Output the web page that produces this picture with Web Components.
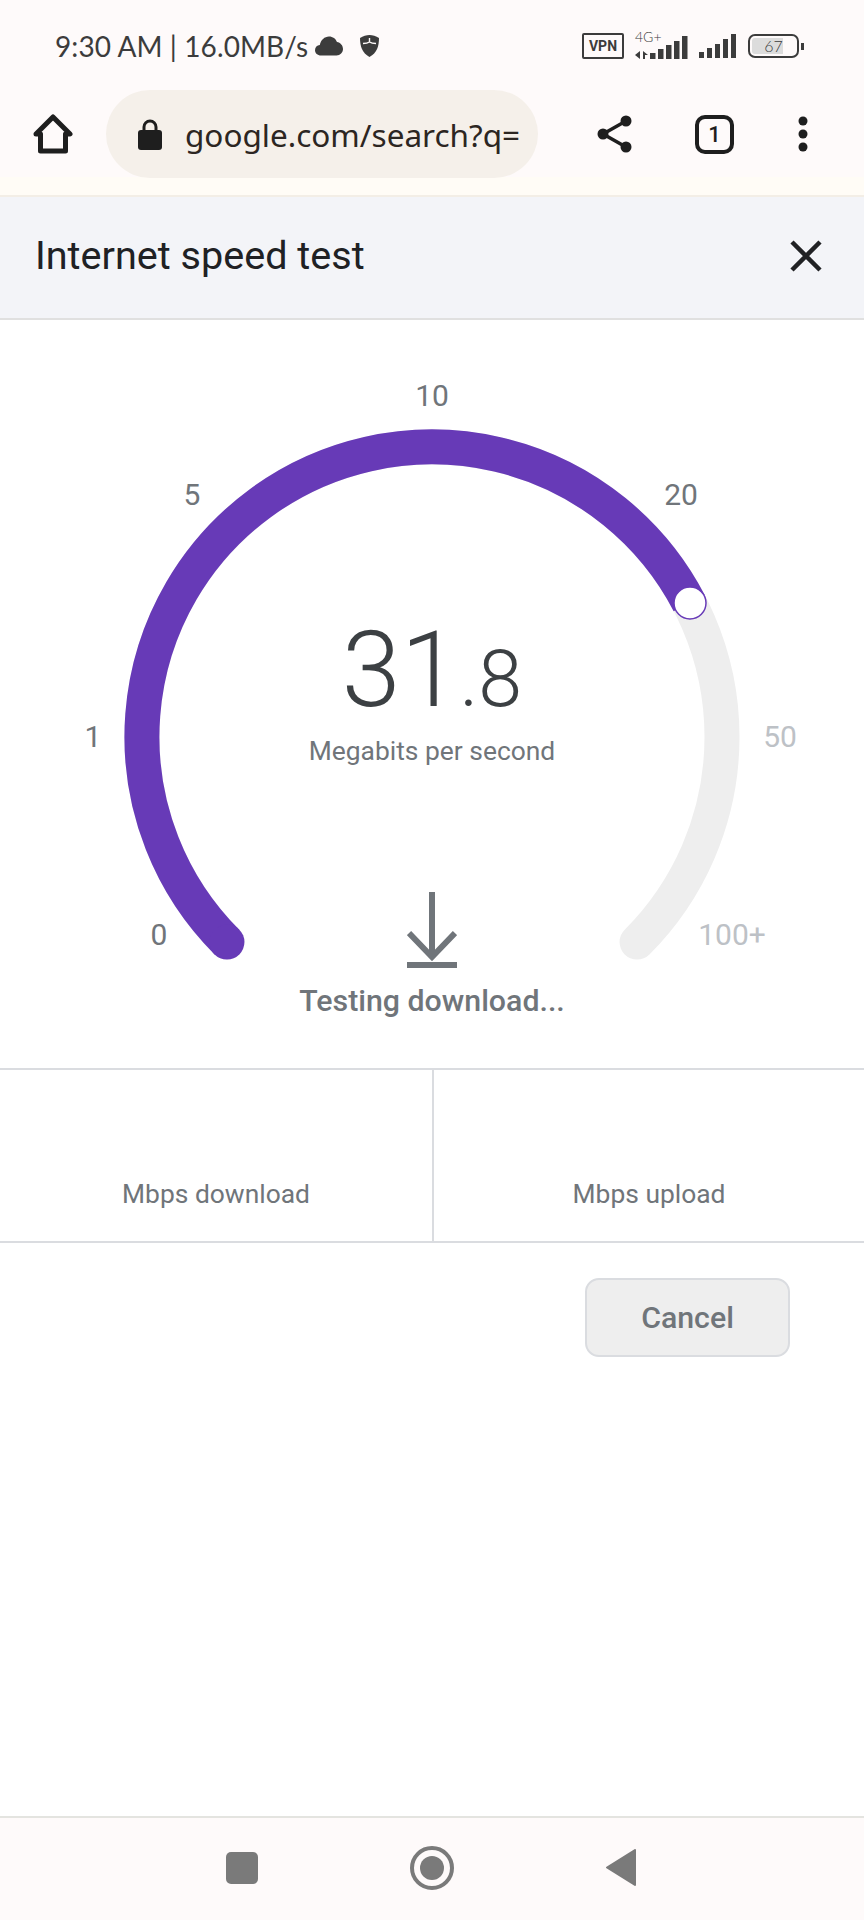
<!DOCTYPE html>
<html>
<head>
<meta charset="utf-8">
<title>Internet speed test</title>
<style>
  html, body { margin: 0; padding: 0; background: #fff; }
  body { width: 864px; height: 1920px; display: flex; flex-direction: column; overflow: hidden; font-family: Roboto, "Liberation Sans", sans-serif; }
  speed-main { flex: 1; }
</style>
</head>
<body>
<status-bar></status-bar>
<browser-toolbar url="google.com/search?q="></browser-toolbar>
<speed-main>
  <speed-header>Internet speed test</speed-header>
  <speed-gauge></speed-gauge>
  <speed-results></speed-results>
  <speed-actions><action-button>Cancel</action-button></speed-actions>
</speed-main>
<nav-bar></nav-bar>

<script>
class StatusBar extends HTMLElement {
  constructor(){
    super();
    this._root = this.attachShadow({mode: 'open'});
  }
  connectedCallback() {
    this._root.innerHTML = `
    <style>
      :host { display: flex; align-items: center; height: 72px; padding: 20px 0 0 55px; box-sizing: border-box; background: #fefafa; color: #3c3c3c; }
      .time { font: 400 28px Lato, sans-serif; white-space: nowrap; width: 258px; letter-spacing: .1px; }
      .cloud { margin-left: 2px; }
      .shield { margin-left: 17px; }
      .right { display: flex; align-items: center; margin-left: 203px; }
      .vpn { width: 42px; height: 26px; box-sizing: border-box; border: 2.5px solid #3c3c3c; border-radius: 2px; font: 700 14px Roboto, sans-serif; display: flex; align-items: center; justify-content: center; }
      .net { position: relative; width: 53px; height: 27px; margin-left: 11px; }
      .net span { position: absolute; left: 0; top: -5px; font: 300 14px Lato, sans-serif; }
      .sig2 { margin-left: 11px; }
      .battery { margin-left: 12px; width: 51px; height: 24px; box-sizing: border-box; border: 2px solid #3c3c3c; border-radius: 7px; padding: 2px; position: relative; }
      .fill { width: 31px; height: 16px; background: #dcdcdc; border-radius: 3px 0 0 3px; }
      .battery span { position: absolute; left: 0; right: 0; top: 0; text-align: center; font: 300 16px/20px Lato, sans-serif; }
      .nub { width: 3px; height: 7px; background: #3c3c3c; margin-left: 2px; }
    </style>
    <span class="time">9:30 AM | 16.0MB/s</span>
    <svg class="cloud" width="28" height="20" viewBox="0 0 28 20"><path fill="#3c3c3c" d="M6 19.5C2.5 19.5 0 17 0 14.2c0-2.8 2-5 4.8-5.2C5.8 4 9.6.5 14 .5c3.8 0 6.8 2.2 8 5.6 3.4.6 6 3.4 6 7 0 3.6-2.8 6.4-6.5 6.4z"/></svg>
    <svg class="shield" width="19" height="22" viewBox="0 0 19 22"><path fill="#3c3c3c" d="M9.5 0C6.5 0 3 1 0 3c0 8 2 15 9.5 19C17 18 19 11 19 3c-3-2-6.5-3-9.500-3z"/><path fill="none" stroke="#fefafa" stroke-width="1.400" d="M9.500 3v4M3 8.500c2.500 0 5-.5 6.500-1.500 1.500 1 4 1.500 6.500 1.500"/></svg>
    <div class="right">
      <div class="vpn">VPN</div>
      <div class="net">
        <span>4G+</span>
        <svg width="53" height="27" viewBox="0 0 53 27"><g fill="#3c3c3c"><path d="M5 18v8L0 22zM8 18v8h2v-4h3z"/><rect x="15" y="20" width="5.500" height="6"/><rect x="23" y="16" width="5.500" height="10"/><rect x="31" y="12" width="5.500" height="14"/><rect x="39" y="8" width="5.500" height="18"/><rect x="47" y="3" width="5.500" height="23"/></g></svg>
      </div>
      <svg class="sig2" width="37" height="24" viewBox="0 0 37 24"><g fill="#3c3c3c"><rect x="0" y="18" width="5" height="6"/><rect x="8" y="14" width="5" height="10"/><rect x="16" y="10" width="5" height="14"/><rect x="24" y="5" width="5" height="19"/><rect x="32" y="0" width="5" height="24"/></g></svg>
      <div class="battery"><div class="fill"></div><span>67</span></div>
      <div class="nub"></div>
    </div>`;
  }
}

class BrowserToolbar extends HTMLElement {
  constructor(){
    super();
    this._root = this.attachShadow({mode: 'open'});
  }
  connectedCallback() {
    this._root.innerHTML = `
    <style>
      :host { display: flex; height: 125px; box-sizing: border-box; padding: 18px 0 0 33px; background: linear-gradient(#fefafa 105px, #fffcf6 105px); border-bottom: 2px solid #f3eee6; }
      .row { display: flex; align-items: center; height: 88px; }
      .box { width: 432px; height: 88px; box-sizing: border-box; margin-left: 33px; padding-left: 32px; border-radius: 44px; background: #f5f0ea; display: flex; align-items: center; overflow: hidden; }
      .url { margin-left: 23px; font: 400 31.5px "Noto Sans", sans-serif; color: #2c2622; white-space: nowrap; width: 335px; overflow: hidden; }
      .share { margin-left: 59px; }
      .tab { margin-left: 62px; width: 39px; height: 39px; box-sizing: border-box; border: 4.5px solid #1e1e1e; border-radius: 10px; font: 500 22px Roboto, sans-serif; color: #1e1e1e; display: flex; align-items: center; justify-content: center; }
      .dots { margin-left: 64px; }
    </style>
    <div class="row">
      <svg width="40" height="40" viewBox="0 0 40 40"><path fill="none" stroke="#1e1e1e" stroke-width="5" stroke-linejoin="round" d="M3 20L20 3l17 17h-4.500v17h-25V20z"/></svg>
      <div class="box">
        <svg width="24" height="31" viewBox="0 0 24 31"><path fill="none" stroke="#1e1e1e" stroke-width="3" d="M6 13V8a6 6 0 0 1 12 0v5"/><rect y="11" width="24" height="20" rx="3" fill="#1e1e1e"/></svg>
        <span class="url">${this.getAttribute('url')}</span>
      </div>
      <svg class="share" width="36" height="38" viewBox="0 0 36 38"><g fill="#1e1e1e"><circle cx="29" cy="6" r="5.500"/><circle cx="6" cy="19" r="5.500"/><circle cx="29" cy="32" r="5.500"/></g><path fill="none" stroke="#1e1e1e" stroke-width="3.500" d="M29 6L6 19l23 13"/></svg>
      <div class="tab">1</div>
      <svg class="dots" width="10" height="36" viewBox="0 0 10 36"><g fill="#1e1e1e"><circle cx="5" cy="5" r="4.500"/><circle cx="5" cy="18" r="4.500"/><circle cx="5" cy="31" r="4.500"/></g></svg>
    </div>`;
  }
}

class SpeedMain extends HTMLElement {
  constructor(){
    super();
    this._root = this.attachShadow({mode: 'open'});
  }
  connectedCallback() {
    this._root.innerHTML = `
    <style>:host { display: block; background: #fff; }</style>
    <slot></slot>`;
  }
}

class SpeedHeader extends HTMLElement {
  constructor(){
    super();
    this._root = this.attachShadow({mode: 'open'});
  }
  connectedCallback() {
    this._root.innerHTML = `
    <style>
      :host { display: flex; align-items: center; justify-content: space-between; height: 123px; box-sizing: border-box; padding: 0 42px 4px 35px; background: #f3f4f8; border-bottom: 2px solid #e0e0e0; color: #202124; font: 400 39.6px Roboto, sans-serif; }
    </style>
    <span><slot></slot></span>
    <svg width="32" height="32" viewBox="0 0 32 32"><path stroke="#202124" stroke-width="4.500" d="M2 2l28 28M30 2L2 30"/></svg>`;
  }
}

class SpeedGauge extends HTMLElement {
  constructor(){
    super();
    this._root = this.attachShadow({mode: 'open'});
    this._ticks = [
      ['10', 432, 75, 1], ['5', 192, 174, 1], ['20', 681, 174, 1], ['1', 93, 416, 1],
      ['50', 780, 416, 0], ['0', 159, 614, 1], ['100+', 732, 614, 0]
    ];
  }
  connectedCallback() {
    const ticks = this._ticks.map(t => `<span class="tick ${t[3] ? '' : 'off'}" style="left:${t[1]}px;top:${t[2]}px">${t[0]}</span>`).join('');
    this._root.innerHTML = `
    <style>
      :host { display: flex; flex-direction: column; align-items: center; position: relative; height: 748px; box-sizing: border-box; padding-top: 290px; }
      svg.dial { position: absolute; left: 0; top: 0; }
      .tick { position: absolute; transform: translate(-50%, -50%); font: 400 30px Roboto, sans-serif; color: #70757a; }
      .tick.off { color: #bdc1c6; }
      .value { position: relative; font: 300 106px/120px Roboto, sans-serif; color: #3c4043; white-space: nowrap; }
      .value small { font-size: 79px; }
      .unit { font: 400 26.4px/34px Roboto, sans-serif; color: #70757a; margin-top: -5.5px; }
      .arrow { position: relative; margin-top: 124px; }
      .state { position: relative; font: 500 30.3px/40px Roboto, sans-serif; color: #70757a; margin-top: 13px; }
    </style>
    <svg class="dial" width="864" height="748" viewBox="0 0 864 748">
      <path fill="none" stroke="#eeeeee" stroke-width="35" stroke-linecap="round" d="M226.940 622.060A290 290 0 1 1 637.060 622.060"/>
      <path fill="none" stroke="#673ab7" stroke-width="35" d="M226.940 622.060A290 290 0 1 1 689.200 283.100"/>
      <circle cx="226.940" cy="622.060" r="17.500" fill="#673ab7"/>
      <circle cx="690" cy="283" r="16" fill="#fff" stroke="#673ab7" stroke-width="1.500"/>
    </svg>
    ${ticks}
    <div class="value">31<small>.8</small></div>
    <div class="unit">Megabits per second</div>
    <svg class="arrow" width="50" height="76" viewBox="0 0 50 76"><path fill="none" stroke="#70757a" stroke-width="6" d="M25 0v64M2 41l23 24 23-24M0 73h50"/></svg>
    <div class="state">Testing download...</div>`;
  }
}

class SpeedResults extends HTMLElement {
  constructor(){
    super();
    this._root = this.attachShadow({mode: 'open'});
  }
  connectedCallback() {
    this._root.innerHTML = `
    <style>
      :host { display: grid; grid-template-columns: 1fr 1fr; height: 175px; box-sizing: border-box; border-top: 2px solid #dadce0; border-bottom: 2px solid #dadce0; }
      div { display: flex; align-items: flex-end; justify-content: center; padding-bottom: 30px; font: 400 26.4px/34px Roboto, sans-serif; color: #70757a; }
      div + div { border-left: 2px solid #dadce0; }
    </style>
    <div>Mbps download</div>
    <div>Mbps upload</div>`;
  }
}

class SpeedActions extends HTMLElement {
  constructor(){
    super();
    this._root = this.attachShadow({mode: 'open'});
  }
  connectedCallback() {
    this._root.innerHTML = `
    <style>:host { display: flex; justify-content: flex-end; padding: 35px 74px 0 0; }</style>
    <slot></slot>`;
  }
}

class ActionButton extends HTMLElement {
  constructor(){
    super();
    this._root = this.attachShadow({mode: 'open'});
  }
  connectedCallback() {
    this._root.innerHTML = `
    <style>
      :host { display: flex; align-items: center; justify-content: center; width: 205px; height: 79px; box-sizing: border-box; background: #eeeeee; border: 2px solid #dadce0; border-radius: 14px; font: 500 30.3px Roboto, sans-serif; color: #70757a; }
    </style>
    <slot></slot>`;
  }
}

class NavBar extends HTMLElement {
  constructor(){
    super();
    this._root = this.attachShadow({mode: 'open'});
  }
  connectedCallback() {
    this._root.innerHTML = `
    <style>
      :host { display: flex; align-items: center; height: 104px; box-sizing: border-box; border-top: 2px solid #e4e4e0; padding: 0 0 3px 226px; background: #fefafa; }
      .square { width: 32px; height: 32px; border-radius: 5px; background: #7a7a7a; }
      .home { margin-left: 152px; }
      .back { margin-left: 152px; }
    </style>
    <div class="square"></div>
    <svg class="home" width="44" height="44" viewBox="0 0 44 44"><circle cx="22" cy="22" r="20" fill="none" stroke="#7a7a7a" stroke-width="4"/><circle cx="22" cy="22" r="12" fill="#7a7a7a"/></svg>
    <svg class="back" width="30" height="37" viewBox="0 0 30 37"><path fill="#7a7a7a" stroke="#7a7a7a" stroke-width="2" stroke-linejoin="round" d="M29 1v35L1 18.500z"/></svg>`;
  }
}

window.customElements.define('status-bar', StatusBar);
window.customElements.define('browser-toolbar', BrowserToolbar);
window.customElements.define('speed-main', SpeedMain);
window.customElements.define('speed-header', SpeedHeader);
window.customElements.define('speed-gauge', SpeedGauge);
window.customElements.define('speed-results', SpeedResults);
window.customElements.define('speed-actions', SpeedActions);
window.customElements.define('action-button', ActionButton);
window.customElements.define('nav-bar', NavBar);
</script>
</body>
</html>
